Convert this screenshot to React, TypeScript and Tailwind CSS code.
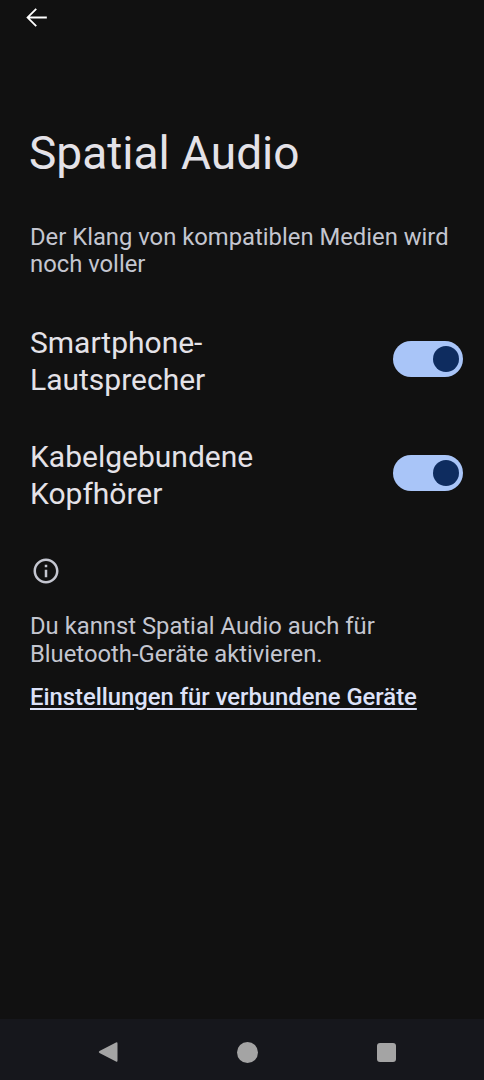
import React from "react";

function Toggle() {
  return (
    <div className="w-[70px] h-[36px] mb-[5px] rounded-full bg-[#a9c5f8] flex items-center justify-end pr-[4px] shrink-0">
      <div className="w-[26px] h-[26px] rounded-full bg-[#0e2c5f]" />
    </div>
  );
}

export default function App() {
  return (
    <div
      className="w-[484px] h-[1080px] bg-[#111111] flex flex-col overflow-hidden"
      style={{ fontFamily: "Roboto, 'Noto Sans', sans-serif" }}
    >
      <div className="flex-1 flex flex-col">
        <div className="h-[34px] pt-[2px] pl-[21px]">
          <svg width="31" height="31" viewBox="0 0 24 24" fill="#ffffff">
            <path d="M20 11.3H6.8l5.5-5.5-1-1L4.1 12l7.2 7.2 1-1-5.5-5.5H20z" />
          </svg>
        </div>
        <h1 className="mt-[92px] pl-[29px] text-[46px] leading-[54px] text-[#e4e2e8] font-normal">
          Spatial Audio
        </h1>
        <p className="mt-[44px] pl-[30px] pr-[20px] text-[23.8px] leading-[27px] text-[#c4c6d0]">
          Der Klang von kompatiblen Medien wird noch voller
        </p>
        <div className="mt-[46px] pl-[30px] pr-[21px] flex items-center justify-between">
          <div className="text-[30px] leading-[37px] text-[#e4e2e8]">
            Smartphone-
            <br />
            Lautsprecher
          </div>
          <Toggle />
        </div>
        <div className="mt-[40px] pl-[30px] pr-[21px] flex items-center justify-between">
          <div className="text-[30px] leading-[37px] text-[#e4e2e8]">
            Kabelgebundene
            <br />
            Kopfhörer
          </div>
          <Toggle />
        </div>
        <div className="mt-[44px] pl-[31px]">
          <svg width="30" height="30" viewBox="0 0 24 24" fill="#c4c6d0">
            <path d="M11 7h2v2h-2zm0 4h2v6h-2zm1-9C6.48 2 2 6.48 2 12s4.48 10 10 10 10-4.48 10-10S17.52 2 12 2zm0 18c-4.41 0-8-3.59-8-8s3.59-8 8-8 8 3.59 8 8-3.59 8-8 8z" />
          </svg>
        </div>
        <p className="mt-[26px] pl-[30px] pr-[20px] text-[23.8px] leading-[28px] text-[#c4c6d0]">
          Du kannst Spatial Audio auch für
          <br />
          Bluetooth-Geräte aktivieren.
        </p>
        <a className="mt-[15px] pl-[30px] text-[23.8px] leading-[28px] font-medium text-[#dde2f8] underline decoration-[2px] underline-offset-[3px]">
          Einstellungen für verbundene Geräte
        </a>
      </div>
      <div className="h-[61px] bg-[#16171c] flex items-center justify-center shrink-0 pl-[8px] pt-[5px]">
        <div className="flex items-center">
          <svg width="22" height="24" viewBox="0 0 22 24">
            <path d="M19 2.5 Q20.5 1.8 20.5 3.5 V20.5 Q20.5 22.2 19 21.5 L2.5 13 Q1 12 2.5 11 Z" fill="#a4a4a4" />
          </svg>
          <div className="ml-[118px] w-[21px] h-[21px] rounded-full bg-[#a4a4a4]" />
          <div className="ml-[119px] w-[19px] h-[19px] rounded-[3px] bg-[#a4a4a4]" />
        </div>
      </div>
    </div>
  );
}
